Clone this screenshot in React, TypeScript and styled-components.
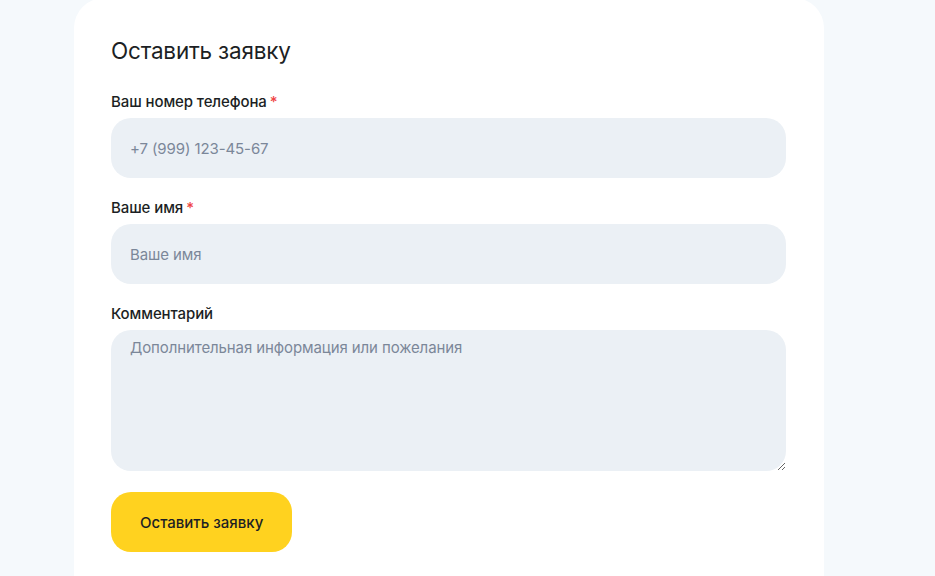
import styled, { createGlobalStyle } from 'styled-components';

const GlobalStyle = createGlobalStyle`
  * {
    box-sizing: border-box;
  }

  body {
    margin: 0;
    background: #f5f9fc;
    font-family: Inter, 'Noto Sans', sans-serif;
    color: #1c1f24;
  }
`;

type FieldProps = {
  label: string;
  required?: boolean;
  placeholder: string;
  multiline?: boolean;
};

function Field({ label, required, placeholder, multiline }: FieldProps) {
  return (
    <FieldBox>
      <LabelText>
        {label}
        {required && <RequiredMark>*</RequiredMark>}
      </LabelText>
      {multiline ? <CommentArea placeholder={placeholder} /> : <TextInput placeholder={placeholder} />}
    </FieldBox>
  );
}

function App() {
  return (
    <>
      <GlobalStyle />
      <PageBox>
        <FormCard>
          <TitleText>Оставить заявку</TitleText>
          <FieldsBox>
            <Field label="Ваш номер телефона" required placeholder="+7 (999) 123-45-67" />
            <Field label="Ваше имя" required placeholder="Ваше имя" />
            <Field label="Комментарий" placeholder="Дополнительная информация или пожелания" multiline />
          </FieldsBox>
          <SubmitButton type="button">Оставить заявку</SubmitButton>
        </FormCard>
      </PageBox>
    </>
  );
}

const PageBox = styled.div`
  width: 935px;
  height: 576px;
  overflow: hidden;
  padding-left: 74px;
`;

const FormCard = styled.form`
  width: 750px;
  min-height: 640px;
  margin-top: -2px;
  padding: 37px 38px 40px 37px;
  background: #ffffff;
  border-radius: 30px;
  display: flex;
  flex-direction: column;
  align-items: flex-start;
`;

const TitleText = styled.h2`
  margin: 0 0 25px;
  font-size: 22.5px;
  line-height: 32px;
  font-weight: 400;
  letter-spacing: -0.2px;
  color: #1c1f24;
`;

const FieldsBox = styled.div`
  width: 100%;
  display: flex;
  flex-direction: column;
  gap: 20px;
  margin-bottom: 21px;
`;

const FieldBox = styled.label`
  display: flex;
  flex-direction: column;
  gap: 6px;
`;

const LabelText = styled.span`
  font-size: 15px;
  line-height: 20px;
  font-weight: 500;
  letter-spacing: -0.1px;
  color: #1c1f24;
`;

const RequiredMark = styled.span`
  color: #ef4444;
  margin-left: 3px;
`;

const inputBase = `
  width: 100%;
  border: none;
  outline: none;
  background: #ebf0f5;
  border-radius: 20px;
  padding: 0 19px;
  font-family: Inter, 'Noto Sans', sans-serif;
  font-size: 15px;
  letter-spacing: -0.1px;
  color: #1c1f24;

  &::placeholder {
    color: #7b8799;
  }
`;

const TextInput = styled.input`
  ${inputBase}
  height: 60px;
`;

const CommentArea = styled.textarea`
  ${inputBase}
  height: 141px;
  padding-top: 8px;
  line-height: 20px;
  resize: vertical;
`;

const SubmitButton = styled.button`
  height: 60px;
  padding: 0 29px;
  border: none;
  border-radius: 20px;
  background: #ffd21f;
  font-family: Inter, 'Noto Sans', sans-serif;
  font-size: 15px;
  font-weight: 500;
  color: #1c1f24;
  cursor: pointer;
`;

export default App;
